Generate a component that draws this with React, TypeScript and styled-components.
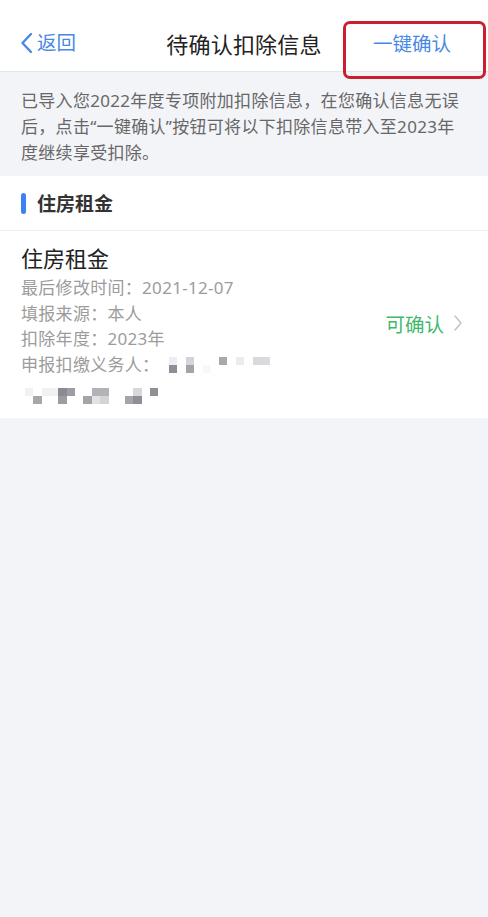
import React from "react";
import styled, { createGlobalStyle } from "styled-components";

const Global = createGlobalStyle`
  html, body { margin: 0; padding: 0; background: #f3f4f8; }
  body { font-family: "Noto Sans", "Noto Sans CJK SC", sans-serif; -webkit-font-smoothing: antialiased; }
  #root { min-height: 917px; }
`;

const Page = styled.div`
  width: 488px;
  min-height: 917px;
  background: #f3f4f8;
  position: relative;
`;

const NavBar = styled.header`
  box-sizing: border-box;
  height: 72px;
  padding-top: 14px;
  background: #fff;
  border-bottom: 1px solid #e4e5ea;
  display: grid;
  grid-template-columns: 1fr auto 1fr;
  align-items: center;
  position: relative;
`;

const Back = styled.div`
  display: flex;
  align-items: center;
  gap: 3px;
  padding-left: 20px;
  color: #4a88e6;
  font-size: 19.5px;
  line-height: 1;
`;

const Title = styled.h1`
  margin: 0;
  font-size: 22px;
  font-weight: 400;
  color: #222;
  letter-spacing: 0.2px;
`;

const Action = styled.div`
  justify-self: end;
  padding-right: 37px;
  color: #4a88e6;
  font-size: 19.5px;
`;

const Highlight = styled.div`
  position: absolute;
  left: 343px;
  top: 21px;
  width: 137px;
  height: 52px;
  border: 3px solid #c8202f;
  border-radius: 7px;
  pointer-events: none;
`;

const Notice = styled.p`
  margin: 0;
  padding: 16px 8px 10px 21px;
  font-size: 17px;
  line-height: 26px;
  letter-spacing: 0.3px;
  color: #676767;
  white-space: nowrap;
`;

const Section = styled.section`
  background: #fff;
`;

const SectionHead = styled.div`
  height: 54px;
  display: flex;
  align-items: center;
  gap: 11px;
  padding-left: 21px;
  border-bottom: 1px solid #eeeff2;
  font-size: 19px;
  font-weight: 700;
  color: #333;
`;

const Bar = styled.span`
  width: 5px;
  height: 21px;
  border-radius: 3px;
  background: #3d82f0;
`;

const Item = styled.div`
  display: flex;
  align-items: center;
  padding: 12px 25px 13px 21px;
`;

const ItemBody = styled.div`
  flex: 1;
`;

const ItemTitle = styled.div`
  font-size: 22px;
  line-height: 30px;
  margin-bottom: 2px;
  color: #222;
`;

const Detail = styled.div`
  display: flex;
  align-items: center;
  font-size: 17px;
  line-height: 25.5px;
  letter-spacing: 0.3px;
  color: #9c9c9c;
`;

const Status = styled.div`
  display: flex;
  align-items: center;
  gap: 9px;
  color: #3fb86d;
  font-size: 19.5px;
  margin-bottom: 2px;
`;

type Cell = [number, number, number, number, string];

const Mosaic = ({ cells, width }: { cells: Cell[]; width: number }) => (
  <svg width={width} height={17} viewBox={`0 0 ${width} 17`} style={{ display: "block" }}>
    {cells.map(([x, y, w, h, c], i) => (
      <rect key={i} x={x} y={y} width={w} height={h} fill={c} />
    ))}
  </svg>
);

const row1: Cell[] = [
  [0, 1, 8, 8, "#eceef3"],
  [0, 9, 8, 8, "#8e8e96"],
  [17, 1, 8, 8, "#d4d5da"],
  [17, 9, 8, 8, "#a3a3a8"],
  [34, 9, 8, 8, "#f8f8fa"],
  [50, 1, 8, 8, "#a9a9ad"],
  [67, 1, 8, 8, "#ececef"],
  [84, 1, 17, 8, "#d9dade"],
];

const row2: Cell[] = [
  [0, 0, 8, 8, "#f1f1f4"],
  [8, 8, 9, 8, "#a7a7ab"],
  [17, 0, 17, 8, "#f1f1f3"],
  [33, 0, 9, 8, "#8b8b93"],
  [33, 8, 9, 8, "#9c9ca2"],
  [42, 0, 8, 8, "#9d9da3"],
  [58, 8, 9, 8, "#a3a3a8"],
  [67, 0, 17, 8, "#b2b2b8"],
  [67, 8, 8, 8, "#e2e2e6"],
  [75, 8, 9, 8, "#d4d4d8"],
  [100, 8, 9, 8, "#a6a6aa"],
  [108, 0, 9, 8, "#d8d8dc"],
  [108, 8, 9, 8, "#8f8f96"],
  [125, 0, 8, 8, "#8f8f95"],
];

const BlurLine = styled.div`
  padding: 11px 0 0;
  margin-left: 4px;
`;

const Blur = styled.span`
  margin-left: 10px;
`;

export default function App() {
  return (
    <Page>
      <Global />
      <NavBar>
        <Back>
          <svg width="14" height="22" viewBox="0 0 14 22">
            <path d="M11 2 L2.5 11 L11 20" fill="none" stroke="#4a88e6" strokeWidth="2.4" strokeLinecap="round" strokeLinejoin="round" />
          </svg>
          返回
        </Back>
        <Title>待确认扣除信息</Title>
        <Action>一键确认</Action>
        <Highlight />
      </NavBar>
      <Notice>
        已导入您2022年度专项附加扣除信息，在您确认信息无误
        <br />
        后，点击“一键确认”按钮可将以下扣除信息带入至2023年
        <br />
        度继续享受扣除。
      </Notice>
      <Section>
        <SectionHead>
          <Bar />
          住房租金
        </SectionHead>
        <Item>
          <ItemBody>
            <ItemTitle>住房租金</ItemTitle>
            <Detail>最后修改时间：2021-12-07</Detail>
            <Detail>填报来源：本人</Detail>
            <Detail>扣除年度：2023年</Detail>
            <Detail>
              申报扣缴义务人：
              <Blur>
                <Mosaic cells={row1} width={101} />
              </Blur>
            </Detail>
            <BlurLine>
              <Mosaic cells={row2} width={134} />
            </BlurLine>
          </ItemBody>
          <Status>
            可确认
            <svg width="10" height="18" viewBox="0 0 10 18">
              <path d="M2 2 L8 9 L2 16" fill="none" stroke="#c4c4c8" strokeWidth="1.6" strokeLinecap="round" strokeLinejoin="round" />
            </svg>
          </Status>
        </Item>
      </Section>
    </Page>
  );
}
